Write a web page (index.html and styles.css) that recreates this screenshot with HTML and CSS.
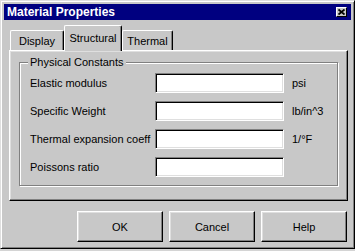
FILE: index.html
```html
<!DOCTYPE html>
<html lang="en">

<head>
    <meta charset="UTF-8">
    <meta name="viewport" content="width=device-width, initial-scale=1.0">
    <title>Material Properties</title>
    <link rel="stylesheet" href="styles.css">
</head>

<body>

    <div class="dialog">
        <div class="titlebar">
            <span class="title">Material Properties</span>
            <span class="close">
                <svg width="7" height="6" viewBox="0 0 7 6">
                    <path d="M0.5 0.5 L6.5 5.5 M6.5 0.5 L0.5 5.5" stroke="#000" stroke-width="1.8" fill="none" />
                </svg>
            </span>
        </div>

        <div class="tabs">
            <div class="tab tab-display">Display</div>
            <div class="tab tab-structural selected">Structural</div>
            <div class="tab tab-thermal">Thermal</div>
        </div>

        <div class="panel">
            <div class="group">
                <span class="legend">Physical Constants</span>
                <div class="rows">
                    <label>Elastic modulus</label>
                    <input type="text" class="field">
                    <span class="unit">psi</span>

                    <label>Specific Weight</label>
                    <input type="text" class="field">
                    <span class="unit">lb/in^3</span>

                    <label>Thermal expansion coeff</label>
                    <input type="text" class="field">
                    <span class="unit">1/°F</span>

                    <label>Poissons ratio</label>
                    <input type="text" class="field">
                    <span class="unit"></span>
                </div>
            </div>
        </div>

        <div class="buttons">
            <button>OK</button>
            <button>Cancel</button>
            <button>Help</button>
        </div>
    </div>

</body>

</html>
```

FILE: styles.css
```css
body {
    margin: 0;
    padding: 0;
    background: #d4d4d4;
    font-family: 'Liberation Sans', Arial, sans-serif;
    font-size: 11px;
    color: #000000;
}

.dialog {
    box-sizing: border-box;
    width: 355px;
    height: 249px;
    padding: 2px;
    background: #c8c8c8;
    border: 1px solid;
    border-color: #dfdfdf #000000 #000000 #dfdfdf;
    box-shadow: inset 1px 1px 0 #ffffff, inset -1px -1px 0 #808080;
}

/* Title bar */
.titlebar {
    display: flex;
    justify-content: space-between;
    align-items: center;
    height: 16px;
    margin: 1px 1px 0 1px;
    padding: 0 4px 0 3px;
    background: #000080;
}

.title {
    color: #ffffff;
    font-size: 12px;
    font-weight: bold;
}

.close {
    box-sizing: border-box;
    display: flex;
    justify-content: center;
    align-items: center;
    width: 11px;
    height: 10px;
    background: #c8c8c8;
    border: 1px solid;
    border-color: #ffffff #000000 #000000 #ffffff;
}

/* Tabs */
.tabs {
    display: flex;
    align-items: flex-end;
    height: 25px;
    margin: 5px 0 0 7px;
    position: relative;
    z-index: 1;
}

.tab {
    box-sizing: border-box;
    height: 20px;
    display: flex;
    justify-content: center;
    align-items: center;
    background: #c8c8c8;
    border-top: 1px solid #ffffff;
    border-left: 1px solid #ffffff;
    border-right: 1px solid #000000;
    border-radius: 2px 2px 0 0;
    box-shadow: inset -1px 0 0 #808080;
}

.tab-display {
    width: 54px;
}

.tab-structural {
    width: 58px;
}

.tab-thermal {
    width: 51px;
}

.tab.selected {
    height: 26px;
    margin-bottom: -1px;
    padding-bottom: 2px;
}

/* Panel */
.panel {
    box-sizing: border-box;
    height: 151px;
    margin: 0 4px 0 6px;
    padding: 11px 9px 0 9px;
    border: 1px solid;
    border-color: #ffffff #000000 #000000 #ffffff;
    box-shadow: inset -1px -1px 0 #808080, inset 1px 1px 0 #dfdfdf;
}

.group {
    position: relative;
    box-sizing: border-box;
    height: 124px;
    border: 1px solid #808080;
    box-shadow: 1px 1px 0 #ffffff, inset 1px 1px 0 #ffffff;
}

.legend {
    position: absolute;
    top: -7px;
    left: 8px;
    padding: 0 2px;
    background: #c8c8c8;
    line-height: 13px;
}

.rows {
    display: grid;
    grid-template-columns: 125px 129px auto;
    row-gap: 8px;
    align-items: center;
    padding: 10px 0 0 10px;
}

.field {
    box-sizing: border-box;
    width: 129px;
    height: 20px;
    margin: 0;
    padding: 0 3px;
    background: #ffffff;
    border: 1px solid;
    border-color: #808080 #ffffff #ffffff #808080;
    box-shadow: inset 1px 1px 0 #000000, inset -1px -1px 0 #dfdfdf;
    font-family: inherit;
    font-size: 11px;
    outline: none;
}

.unit {
    padding-left: 8px;
}

/* Buttons */
.buttons {
    display: flex;
    justify-content: flex-end;
    gap: 6px;
    margin: 10px 5px 0 0;
}

button {
    box-sizing: border-box;
    width: 86px;
    height: 31px;
    margin: 0;
    padding: 0;
    background: #c8c8c8;
    border: 1px solid;
    border-color: #ffffff #000000 #000000 #ffffff;
    box-shadow: inset -1px -1px 0 #808080, inset 1px 1px 0 #dfdfdf;
    font-family: 'Liberation Sans', Arial, sans-serif;
    font-size: 11px;
    color: #000000;
}
```
